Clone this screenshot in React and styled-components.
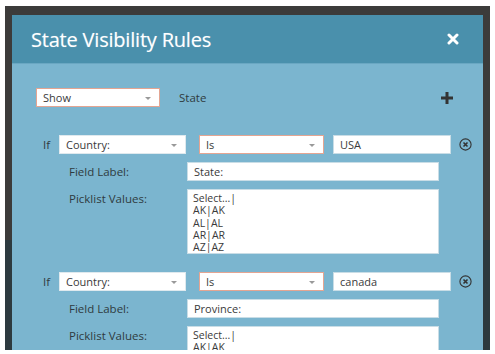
import styled, { createGlobalStyle } from "styled-components";

const GlobalStyle = createGlobalStyle`
  html, body {
    margin: 0;
    background: #ffffff;
  }
  body {
    font-family: "Open Sans", "Liberation Sans", sans-serif;
  }
`;

const StyledBackdrop = styled.div`
  width: 485px;
  height: 344px;
  margin: 6px 0 0 5px;
  padding: 9px 7px 0 7px;
  box-sizing: border-box;
  background: linear-gradient(#3c3b3a 0, #3c3b3a 234px, #2d3a3f 234px);
  overflow: hidden;
`;

const StyledDialog = styled.div`
  height: 100%;
  background: #7bb5cf;
  overflow: hidden;
`;

const StyledHeader = styled.div`
  height: 48px;
  display: flex;
  justify-content: space-between;
  align-items: center;
  padding: 0 24px 0 19px;
  background: #4a90ac;
  border-bottom: 1px solid #6aa7c2;

  h2 {
    margin: 0;
    font-size: 20px;
    font-weight: 400;
    color: #ffffff;
    letter-spacing: -0.2px;
    text-shadow: 0 0 1px rgba(255, 255, 255, 0.4);
  }
`;

const StyledBody = styled.div`
  padding: 24px 29px 0 24px;
`;

const StyledTopRow = styled.div`
  display: flex;
  align-items: center;
  gap: 19px;
  margin-bottom: 27px;

  span {
    font-size: 11.5px;
    color: #2f3b40;
  }

  svg {
    margin-left: auto;
  }
`;

const StyledSelect = styled.div`
  position: relative;
  flex: none;
  width: ${(p) => p.$width}px;
  height: 19px;
  box-sizing: border-box;
  display: flex;
  align-items: center;
  padding-left: 6px;
  background: #ffffff;
  border: 1px solid ${(p) => (p.$error ? "#e4a592" : "#dfe9ee")};
  font-size: 11px;
  color: #3a3a3a;

  &::after {
    content: "";
    position: absolute;
    right: 8px;
    top: 8px;
    border-left: 3px solid transparent;
    border-right: 3px solid transparent;
    border-top: 3px solid #999999;
  }
`;

const StyledInput = styled.div`
  flex: none;
  width: ${(p) => p.$width}px;
  height: 19px;
  box-sizing: border-box;
  display: flex;
  align-items: center;
  padding-left: 6px;
  background: #ffffff;
  border: 1px solid #c9dde6;
  font-size: 11px;
  color: #3a3a3a;
`;

const StyledTextArea = styled.div`
  flex: none;
  width: 252px;
  height: 65px;
  box-sizing: border-box;
  padding: 2px 5px;
  background: #ffffff;
  border: 1px solid #c9dde6;
  font-size: 10.5px;
  line-height: 12.3px;
  color: #3a3a3a;
  white-space: pre;
  overflow: hidden;
`;

const StyledRule = styled.div`
  display: flex;
  flex-direction: column;
  gap: 8px;
  margin-bottom: 17px;
`;

const StyledIfRow = styled.div`
  display: flex;
  align-items: center;
  height: 20px;

  > span {
    flex: none;
    width: 23px;
    padding-left: 7px;
    box-sizing: border-box;
    font-size: 11.5px;
    color: #2f3b40;
  }

  > svg {
    flex: none;
  }
`;

const StyledGap = styled.div`
  width: ${(p) => p.$w}px;
  flex: none;
`;

const StyledFieldRow = styled.div`
  display: flex;
  align-items: ${(p) => (p.$top ? "flex-start" : "center")};
  padding-left: 33px;

  > span {
    width: 118px;
    flex: none;
    font-size: 11.5px;
    color: #2f3b40;
    line-height: 19px;
  }
`;

function CloseIcon() {
  return (
    <svg width="12" height="12" viewBox="0 0 12 12">
      <path d="M2 2 L10 10 M10 2 L2 10" stroke="#ffffff" strokeWidth="3" strokeLinecap="round" />
    </svg>
  );
}

function PlusIcon() {
  return (
    <svg width="14" height="14" viewBox="0 0 14 14">
      <path d="M7 1 V13 M1 7 H13" stroke="#333333" strokeWidth="3" />
    </svg>
  );
}

function RemoveIcon() {
  return (
    <svg width="13" height="13" viewBox="0 0 13 13">
      <circle cx="6.5" cy="6.5" r="5.6" fill="none" stroke="#333333" strokeWidth="1.1" />
      <path d="M4.5 4.5 L8.5 8.5 M8.5 4.5 L4.5 8.5" stroke="#333333" strokeWidth="1.6" />
    </svg>
  );
}

const picklist = "Select...|\nAK|AK\nAL|AL\nAR|AR\nAZ|AZ";

function Rule({ country, fieldLabel }) {
  return (
    <StyledRule>
      <StyledIfRow>
        <span>If</span>
        <StyledSelect $width={127}>Country:</StyledSelect>
        <StyledGap $w={13} />
        <StyledSelect $width={125} $error>
          Is
        </StyledSelect>
        <StyledGap $w={9} />
        <StyledInput $width={118}>{country}</StyledInput>
        <StyledGap $w={8} />
        <RemoveIcon />
      </StyledIfRow>
      <StyledFieldRow>
        <span>Field Label:</span>
        <StyledInput $width={252}>{fieldLabel}</StyledInput>
      </StyledFieldRow>
      <StyledFieldRow $top>
        <span>Picklist Values:</span>
        <StyledTextArea>{picklist}</StyledTextArea>
      </StyledFieldRow>
    </StyledRule>
  );
}

export default function App() {
  return (
    <>
      <GlobalStyle />
      <StyledBackdrop>
        <StyledDialog>
          <StyledHeader>
            <h2>State Visibility Rules</h2>
            <CloseIcon />
          </StyledHeader>
          <StyledBody>
            <StyledTopRow>
              <StyledSelect $width={124} $error>
                Show
              </StyledSelect>
              <span>State</span>
              <PlusIcon />
            </StyledTopRow>
            <Rule country="USA" fieldLabel="State:" />
            <Rule country="canada" fieldLabel="Province:" />
          </StyledBody>
        </StyledDialog>
      </StyledBackdrop>
    </>
  );
}
